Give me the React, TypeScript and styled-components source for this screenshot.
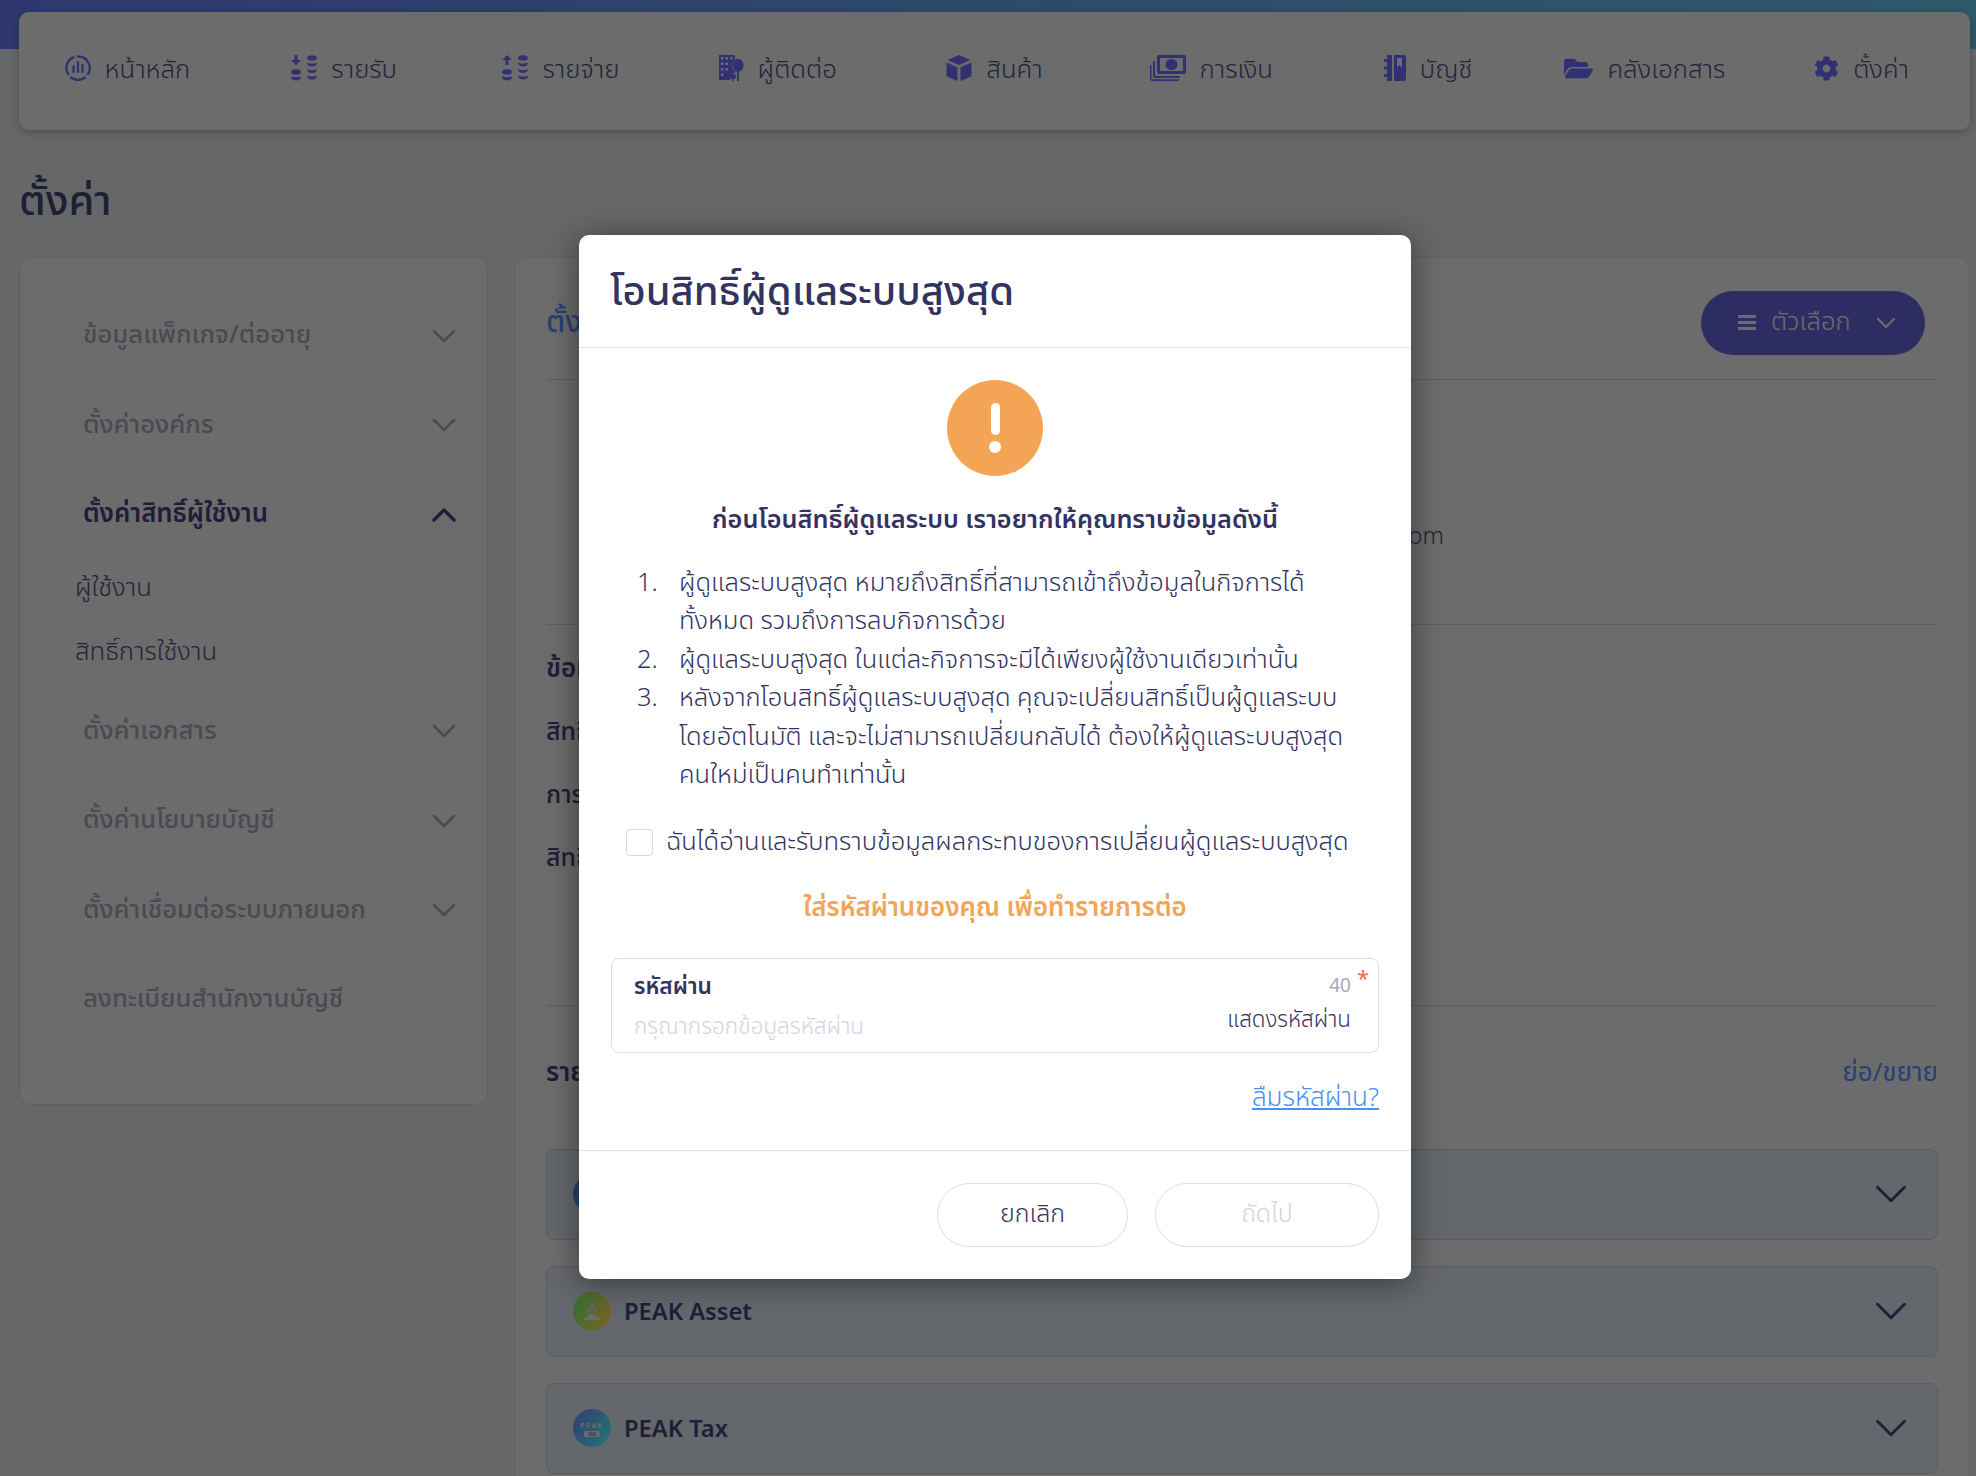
import React from 'react';
import styled, { createGlobalStyle } from 'styled-components';
import { ChevronDown, ChevronUp } from 'lucide-react';
import { FaCog, FaFolderOpen } from 'react-icons/fa';

const FONT = `"Noto Sans Thai", "Noto Sans", "Open Sans", sans-serif`;

const GlobalStyle = createGlobalStyle`
  html, body {
    margin: 0;
    padding: 0;
    background: #e3e5e7;
    font-family: ${FONT};
  }
  * { box-sizing: border-box; }
`;

const Page = styled.div`
  position: relative;
  width: 1976px;
  height: 1476px;
  overflow: hidden;
  background: #e3e5e7;
`;

const TopBar = styled.header`
  padding: 12px 6px 0 19px;
  background: linear-gradient(90deg, #687cf4, #66c8e9) no-repeat;
  background-size: 100% 49px;
`;

const NavCard = styled.nav`
  display: grid;
  grid-template-columns: repeat(9, 1fr);
  align-items: start;
  height: 118px;
  padding-top: 41px;
  background: #f0f0f0;
  border-radius: 10px;
  box-shadow: 0 2px 8px rgba(0, 0, 0, 0.25);
`;

const NavItem = styled.div`
  display: flex;
  align-items: center;
  justify-content: center;
  gap: 14px;
  height: 30px;
  font-size: 25.7px;
  font-weight: 300;
  color: #4e4e85;
  white-space: nowrap;
  svg { color: #6b6bff; flex: none; }
`;

const NavLabel = styled.span`
  padding-top: 4px;
`;

const PageTitle = styled.h1`
  margin: 46px 0 27px 19px;
  font-size: 41.6px;
  line-height: 54px;
  font-weight: 500;
  color: #43437a;
`;

const Columns = styled.div`
  display: grid;
  grid-template-columns: 469px 1456px;
  gap: 26px;
  padding-left: 19px;
  align-items: start;
`;

const SideCard = styled.aside`
  height: 848px;
  padding: 33px 23px 0 63px;
  background: #f0f0f0;
  border: 1px solid #d6d6d6;
  border-radius: 12px;
`;

const SideRow = styled.div<{ $active?: boolean }>`
  display: flex;
  justify-content: space-between;
  align-items: center;
  height: 89.5px;
  font-size: 25.7px;
  font-weight: ${(p) => (p.$active ? 600 : 500)};
  color: ${(p) => (p.$active ? '#43437a' : '#a4a4b8')};
  svg { color: ${(p) => (p.$active ? '#43437a' : '#a4a4b8')}; }
`;

const SubList = styled.div`
  margin-top: -3px;
  margin-bottom: 2px;
`;

const SubItem = styled.div`
  height: 64px;
  margin-left: -8px;
  font-size: 25.7px;
  font-weight: 300;
  line-height: 64px;
  color: #4e4e85;
`;

const MainCard = styled.main`
  height: 1300px;
  padding: 0 31px;
  background: #f0f0f0;
  border: 1px solid #d6d6d6;
  border-radius: 12px;
`;

const MainHead = styled.div`
  display: flex;
  justify-content: space-between;
  align-items: center;
  height: 122px;
  padding-top: 8px;
  border-bottom: 1px solid #cfcfcf;
`;

const MainTitle = styled.div`
  font-size: 30px;
  font-weight: 500;
  color: #5490ff;
`;

const OptionsButton = styled.div`
  display: flex;
  align-items: center;
  justify-content: space-between;
  width: 224px;
  height: 64px;
  margin-right: 13px;
  padding: 0 23px 0 37px;
  border-radius: 32px;
  background: #6664dc;
  font-size: 25.6px;
  font-weight: 300;
  color: #f0f0f0;
`;

const OptionsLabel = styled.span`
  display: flex;
  align-items: center;
  gap: 15px;
`;

const BurgerIcon = styled.span`
  position: relative;
  width: 18px;
  height: 15px;
  border-top: 3px solid #f0f0f0;
  border-bottom: 3px solid #f0f0f0;
  &::after {
    content: '';
    position: absolute;
    left: 0;
    right: 0;
    top: 3px;
    height: 3px;
    background: #f0f0f0;
  }
`;

const EmailBlock = styled.div`
  height: 245px;
  padding: 137px 494px 0 0;
  font-size: 24px;
  font-weight: 300;
  line-height: 40px;
  text-align: right;
  color: #4e4e85;
  border-bottom: 1px solid #cfcfcf;
`;

const InfoBlock = styled.div`
  height: 381px;
  padding-top: 24px;
  border-bottom: 1px solid #cfcfcf;
`;

const SectionLabel = styled.div`
  font-size: 26px;
  line-height: 40px;
  font-weight: 600;
  color: #43437a;
`;

const InfoRow = styled.div`
  margin-top: 23px;
  font-size: 25px;
  line-height: 40px;
  font-weight: 500;
  color: #43437a;
`;

const ListHead = styled.div`
  display: flex;
  justify-content: space-between;
  align-items: center;
  height: 134px;
  margin-bottom: 9px;
`;

const CollapseLink = styled.span`
  font-size: 26px;
  font-weight: 400;
  color: #5490ff;
`;

const ProductRow = styled.div`
  display: flex;
  justify-content: space-between;
  align-items: center;
  height: 91px;
  margin-bottom: 26px;
  padding: 0 19px 2px 26px;
  background: #dee5f0;
  border: 1px solid #c8ccd4;
  border-radius: 8px;
`;

const ProductName = styled.div`
  display: flex;
  align-items: center;
  gap: 13px;
  font-family: "Noto Sans", sans-serif;
  font-size: 23.7px;
  font-weight: 600;
  color: #43437a;
`;

const Overlay = styled.div`
  position: absolute;
  inset: 0;
  display: flex;
  justify-content: center;
  align-items: flex-start;
  padding: 235px 0 0 14px;
  background: rgba(0, 0, 0, 0.55);
`;

const Modal = styled.section`
  width: 832px;
  height: 1044px;
  background: #fff;
  border-radius: 10px;
  box-shadow: 0 4px 32px rgba(0, 0, 0, 0.45);
  color: #33335f;
`;

const ModalHeader = styled.div`
  display: flex;
  align-items: center;
  height: 113px;
  padding: 3px 31px 0;
  border-bottom: 1px solid #e0e0ea;
  font-size: 40px;
  font-weight: 500;
`;

const ModalBody = styled.div`
  height: 803px;
  padding: 32px 32px 0;
  border-bottom: 1px solid #e0e0ea;
`;

const AlertCircle = styled.div`
  display: flex;
  flex-direction: column;
  align-items: center;
  justify-content: center;
  gap: 6px;
  width: 96px;
  height: 96px;
  margin: 0 auto;
  border-radius: 50%;
  background: #f4a455;
`;

const AlertBar = styled.span`
  width: 9px;
  height: 32px;
  border-radius: 5px;
  background: #fff;
`;

const AlertDot = styled.span`
  width: 12px;
  height: 12px;
  border-radius: 50%;
  background: #fff;
`;

const Lead = styled.div`
  margin-top: 24px;
  font-size: 25.3px;
  line-height: 40px;
  font-weight: 600;
  text-align: center;
`;

const Terms = styled.ol`
  margin: 24px 0 0;
  padding: 0 0 0 26px;
  list-style: none;
  font-size: 25.5px;
  font-weight: 300;
  line-height: 38.4px;
`;

const Term = styled.li`
  display: grid;
  grid-template-columns: 42px 1fr;
`;

const CheckRow = styled.label`
  display: flex;
  align-items: center;
  gap: 13px;
  margin: 29px 0 0 15px;
  font-size: 25.5px;
  font-weight: 300;
  line-height: 38px;
  white-space: nowrap;
`;

const CheckBox = styled.span`
  flex: none;
  width: 27px;
  height: 27px;
  border: 1px solid #d8d8e4;
  border-radius: 4px;
`;

const PasswordPrompt = styled.div`
  margin-top: 28px;
  font-size: 25.8px;
  line-height: 40px;
  font-weight: 600;
  text-align: center;
  color: #f4a455;
`;

const Field = styled.div`
  position: relative;
  display: flex;
  justify-content: space-between;
  height: 95px;
  margin-top: 29px;
  padding: 11px 27px 0 22px;
  border: 1px solid #dcdce6;
  border-radius: 8px;
`;

const FieldLabel = styled.div`
  font-size: 22.7px;
  line-height: 34px;
  font-weight: 600;
`;

const Placeholder = styled.div`
  margin-top: 6px;
  font-size: 22.6px;
  font-weight: 300;
  line-height: 34px;
  color: #d4d4de;
`;

const FieldRight = styled.div`
  text-align: right;
`;

const Counter = styled.div`
  font-size: 19px;
  font-weight: 400;
  line-height: 34px;
  color: #a9a9b8;
`;

const ShowPassword = styled.div`
  font-size: 22.4px;
  font-weight: 300;
  line-height: 32px;
`;

const Required = styled.span`
  position: absolute;
  top: 9px;
  right: 9px;
  font-size: 22px;
  line-height: 24px;
  color: #ee6b4d;
`;

const ForgotRow = styled.div`
  margin-top: 25px;
  text-align: right;
  font-size: 26px;
  font-weight: 300;
  line-height: 40px;
`;

const ForgotLink = styled.a`
  color: #4a90f0;
  text-decoration: underline;
`;

const ModalFooter = styled.div`
  display: flex;
  justify-content: flex-end;
  gap: 27px;
  padding: 32px 32px 0;
`;

const PillButton = styled.div<{ $width: number; $disabled?: boolean }>`
  display: flex;
  align-items: center;
  justify-content: center;
  width: ${(p) => p.$width}px;
  height: 64px;
  padding-bottom: 2px;
  border: 1px solid #dcdce6;
  border-radius: 32px;
  font-size: 25px;
  font-weight: 300;
  color: ${(p) => (p.$disabled ? '#d4d4de' : '#33335f')};
`;

const DashIcon = () => (
  <svg width="26" height="26" viewBox="0 0 26 26" fill="none" stroke="currentColor" strokeLinecap="round">
    <path d="M3 19A11.500 11.500 0 0 1 8.500 2.400M13 1.500a11.500 11.500 0 0 1 10 17.500" strokeWidth="2.400" />
    <path d="M6 22.500a11.500 11.500 0 0 0 14 0" strokeWidth="2.400" />
    <path d="M8.500 11v6M13 7v10M17.500 10v7" strokeWidth="2.200" />
  </svg>
);

const CoinsIcon = ({ up }: { up?: boolean }) => (
  <svg width="26" height="26" viewBox="0 0 26 26" fill="currentColor">
    <path d={up ? 'M5 0l5 5H6.500v5h-3V5H0z' : 'M3.500 0h3v5H10l-5 5-5-5h3.500z'} />
    <ellipse cx="5" cy="17" rx="4.800" ry="2.800" />
    <path d="M.2 21c1.500 1.500 8 1.500 9.600 0v1.500C9.800 24 8 25.500 5 25.500S.2 24 .2 22.500z" />
    <ellipse cx="21" cy="3" rx="4.800" ry="2.800" />
    <path d="M16.200 7.500c1.500 1.500 8 1.500 9.600 0v1C25.800 10 24 11.500 21 11.500s-4.800-1.500-4.800-3z" />
    <path d="M16.200 14c1.500 1.500 8 1.500 9.600 0v1c0 1.500-1.800 3-4.800 3s-4.800-1.500-4.800-3z" />
    <path d="M16.200 20.500c1.500 1.500 8 1.500 9.600 0v1c0 1.500-1.800 3-4.800 3s-4.800-1.500-4.800-3z" />
  </svg>
);

const ContactIcon = () => (
  <svg width="25" height="26" viewBox="0 0 25 26" fill="currentColor">
    <path fillRule="evenodd" d="M0 0h16v4.500c-2 1.500-3 3.500-3 6 0 2.500 1 4.500 3 6V18c-3 0-5 2-5 4.500V25H0zM2 2v2.500h2.500V2zM6.500 2v2.500H9V2zM11 2v2.500h2.500V2zM2 7.500V10h2.500V7.500zM6.500 7.500V10H9V7.500zM2 13v2.500h2.500V13zM6.500 13v2.500H9V13zM2 18.500V21h2.500v-2.500z" />
    <path d="M19 4c3.200 0 5.500 2.500 5.500 6s-2 6.500-4.500 6.800V26h-2V16.800c-2.500-.3-4.500-3.300-4.500-6.800S15.800 4 19 4z" />
    <path d="M14 18.500c1.800 0 3 1.300 3 3 0 1.500-1 2.700-2.200 3V26h-1.600v-1.500c-1.200-.3-2.200-1.500-2.200-3 0-1.700 1.200-3 3-3z" />
  </svg>
);

const CubeIcon = () => (
  <svg width="26" height="26" viewBox="0 0 26 26" fill="currentColor">
    <path d="M13 0l11.500 5L13 10 1.500 5z" />
    <path d="M.5 7.500l11 4.800V26l-11-4.800z" />
    <path d="M25.500 7.500l-11 4.800V26l11-4.800z" />
  </svg>
);

const MoneyIcon = () => (
  <svg width="36" height="26" viewBox="0 0 36 26" fill="currentColor">
    <path fillRule="evenodd" d="M9 0h25a2 2 0 0 1 2 2v15a2 2 0 0 1-2 2H9a2 2 0 0 1-2-2V2a2 2 0 0 1 2-2zM10 3v13h23V3z" />
    <ellipse cx="21.500" cy="9.500" rx="6" ry="5.500" />
    <path d="M3 6v15a2 2 0 0 0 2 2h25v-2H6a1 1 0 0 1-1-1V6zM0 10v13.500A2.500 2.500 0 0 0 2.500 26H29v-1.800H3a1.500 1.500 0 0 1-1.500-1.500V10z" />
  </svg>
);

const LedgerIcon = () => (
  <svg width="22" height="26" viewBox="0 0 22 26" fill="currentColor">
    <path d="M3 0h5v26H3zM0 4h3v3H0zM0 11.500h3v3H0zM0 19h3v3H0z" />
    <path fillRule="evenodd" d="M10 0h10a2 2 0 0 1 2 2v22a2 2 0 0 1-2 2H10zM13 3v9.500l2.500-2.500 2.500 2.500V3z" />
  </svg>
);

const AssetLogo = () => (
  <svg width="38" height="38" viewBox="0 0 38 38">
    <defs>
      <linearGradient id="assetGrad" x1="0" y1="0" x2="1" y2="0.4">
        <stop offset="0" stopColor="#64ff78" />
        <stop offset="1" stopColor="#ffdc50" />
      </linearGradient>
    </defs>
    <circle cx="19" cy="19" r="19" fill="url(#assetGrad)" />
    <path d="M19 9l6.500 13-6.500-5-6.500 5z" fill="#d8e4d8" />
    <path d="M9.500 28l9.500-7 9.500 7z" fill="#f0f0f0" />
  </svg>
);

const TaxLogo = () => (
  <svg width="38" height="38" viewBox="0 0 38 38">
    <defs>
      <linearGradient id="taxGrad" x1="0" y1="0" x2="1" y2="0.6">
        <stop offset="0" stopColor="#7882ff" />
        <stop offset="1" stopColor="#50f5ff" />
      </linearGradient>
    </defs>
    <circle cx="19" cy="19" r="19" fill="url(#taxGrad)" />
    <text x="19" y="19" textAnchor="middle" fontSize="7" letterSpacing="1.500" fill="#f0f0f0" fontFamily="Noto Sans, sans-serif">PEAK</text>
    <rect x="11" y="22" width="16" height="6" rx="1" fill="#e8e8f0" />
    <text x="19" y="27" textAnchor="middle" fontSize="4.500" fill="#6070b0" fontFamily="Noto Sans, sans-serif">TAX</text>
  </svg>
);

const BlankLogo = styled.span`
  width: 38px;
  height: 38px;
  border-radius: 50%;
  background: linear-gradient(120deg, #5a78ff, #50f5ff);
`;

const navItems = [
  { label: 'หน้าหลัก', icon: <DashIcon /> },
  { label: 'รายรับ', icon: <CoinsIcon /> },
  { label: 'รายจ่าย', icon: <CoinsIcon up /> },
  { label: 'ผู้ติดต่อ', icon: <ContactIcon /> },
  { label: 'สินค้า', icon: <CubeIcon /> },
  { label: 'การเงิน', icon: <MoneyIcon /> },
  { label: 'บัญชี', icon: <LedgerIcon /> },
  { label: 'คลังเอกสาร', icon: <FaFolderOpen size={29} /> },
  { label: 'ตั้งค่า', icon: <FaCog size={25} /> },
];

const SideChevron = () => <ChevronDown size={40} strokeWidth={1.5} />;
const ProductChevron = () => <ChevronDown size={54} strokeWidth={1.3} color="#43437a" />;

const App = () => (
  <Page>
    <GlobalStyle />
    <TopBar>
      <NavCard>
        {navItems.map((item) => (
          <NavItem key={item.label}>
            {item.icon}
            <NavLabel>{item.label}</NavLabel>
          </NavItem>
        ))}
      </NavCard>
    </TopBar>
    <PageTitle>ตั้งค่า</PageTitle>
    <Columns>
      <SideCard>
        <SideRow>ข้อมูลแพ็กเกจ/ต่ออายุ<SideChevron /></SideRow>
        <SideRow>ตั้งค่าองค์กร<SideChevron /></SideRow>
        <SideRow $active>ตั้งค่าสิทธิ์ผู้ใช้งาน<ChevronUp size={40} strokeWidth={2} /></SideRow>
        <SubList>
          <SubItem>ผู้ใช้งาน</SubItem>
          <SubItem>สิทธิ์การใช้งาน</SubItem>
        </SubList>
        <SideRow>ตั้งค่าเอกสาร<SideChevron /></SideRow>
        <SideRow>ตั้งค่านโยบายบัญชี<SideChevron /></SideRow>
        <SideRow>ตั้งค่าเชื่อมต่อระบบภายนอก<SideChevron /></SideRow>
        <SideRow>ลงทะเบียนสำนักงานบัญชี</SideRow>
      </SideCard>
      <MainCard>
        <MainHead>
          <MainTitle>ตั้งค่า</MainTitle>
          <OptionsButton>
            <OptionsLabel><BurgerIcon />ตัวเลือก</OptionsLabel>
            <ChevronDown size={32} strokeWidth={1.5} />
          </OptionsButton>
        </MainHead>
        <EmailBlock>account.com</EmailBlock>
        <InfoBlock>
          <SectionLabel>ข้อมูล</SectionLabel>
          <InfoRow>สิทธิ์</InfoRow>
          <InfoRow>การ</InfoRow>
          <InfoRow>สิทธิ์</InfoRow>
        </InfoBlock>
        <ListHead>
          <SectionLabel>รายการ</SectionLabel>
          <CollapseLink>ย่อ/ขยาย</CollapseLink>
        </ListHead>
        <ProductRow><ProductName><BlankLogo />PEAK</ProductName><ProductChevron /></ProductRow>
        <ProductRow><ProductName><AssetLogo />PEAK Asset</ProductName><ProductChevron /></ProductRow>
        <ProductRow><ProductName><TaxLogo />PEAK Tax</ProductName><ProductChevron /></ProductRow>
      </MainCard>
    </Columns>
    <Overlay>
      <Modal>
        <ModalHeader>โอนสิทธิ์ผู้ดูแลระบบสูงสุด</ModalHeader>
        <ModalBody>
          <AlertCircle><AlertBar /><AlertDot /></AlertCircle>
          <Lead>ก่อนโอนสิทธิ์ผู้ดูแลระบบ เราอยากให้คุณทราบข้อมูลดังนี้</Lead>
          <Terms>
            <Term><span>1.</span><span>ผู้ดูแลระบบสูงสุด หมายถึงสิทธิ์ที่สามารถเข้าถึงข้อมูลในกิจการได้<br />ทั้งหมด รวมถึงการลบกิจการด้วย</span></Term>
            <Term><span>2.</span><span>ผู้ดูแลระบบสูงสุด ในแต่ละกิจการจะมีได้เพียงผู้ใช้งานเดียวเท่านั้น</span></Term>
            <Term><span>3.</span><span>หลังจากโอนสิทธิ์ผู้ดูแลระบบสูงสุด คุณจะเปลี่ยนสิทธิ์เป็นผู้ดูแลระบบ<br />โดยอัตโนมัติ และจะไม่สามารถเปลี่ยนกลับได้ ต้องให้ผู้ดูแลระบบสูงสุด<br />คนใหม่เป็นคนทำเท่านั้น</span></Term>
          </Terms>
          <CheckRow><CheckBox />ฉันได้อ่านและรับทราบข้อมูลผลกระทบของการเปลี่ยนผู้ดูแลระบบสูงสุด</CheckRow>
          <PasswordPrompt>ใส่รหัสผ่านของคุณ เพื่อทำรายการต่อ</PasswordPrompt>
          <Field>
            <div>
              <FieldLabel>รหัสผ่าน</FieldLabel>
              <Placeholder>กรุณากรอกข้อมูลรหัสผ่าน</Placeholder>
            </div>
            <FieldRight>
              <Counter>40</Counter>
              <ShowPassword>แสดงรหัสผ่าน</ShowPassword>
            </FieldRight>
            <Required>*</Required>
          </Field>
          <ForgotRow><ForgotLink>ลืมรหัสผ่าน?</ForgotLink></ForgotRow>
        </ModalBody>
        <ModalFooter>
          <PillButton $width={191}>ยกเลิก</PillButton>
          <PillButton $width={224} $disabled>ถัดไป</PillButton>
        </ModalFooter>
      </Modal>
    </Overlay>
  </Page>
);

export default App;
